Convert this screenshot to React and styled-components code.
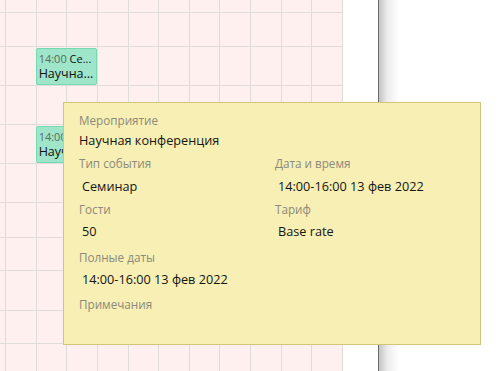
import React from 'react';
import styled, { createGlobalStyle } from 'styled-components';

const GlobalStyle = createGlobalStyle`
  html, body {
    margin: 0;
    padding: 0;
    background: #fff;
    font-family: "Open Sans", "Noto Sans", sans-serif;
  }
`;

const rowHeights = [13, 34, 39, 39, 39, 39, 35, 33, 40, 33, 40];
const colCount = 12;

const events = [
  { row: 3, col: 3, time: '14:00', type: 'Се...', title: 'Научна...' },
  { row: 5, col: 3, time: '14:00', type: 'Се...', title: 'Научна...' },
];

const Page = styled.div`
  display: flex;
  width: 501px;
  height: 371px;
  overflow: hidden;
  position: relative;
`;

const Board = styled.div`
  width: 378px;
  flex: none;
  background: #fff;
`;

const Grid = styled.div`
  display: grid;
  width: 343px;
  grid-template-columns: 6px repeat(11, 1fr);
  grid-template-rows: ${rowHeights.map((h) => `${h}px`).join(' ')};
  background: #fff0f0;
`;

const Cell = styled.div`
  box-sizing: border-box;
  border-right: 1px solid #e0dcdc;
  border-bottom: 1px solid #e0dcdc;
`;

const Event = styled.div`
  grid-column: ${(p) => p.$col} / span 2;
  grid-row: ${(p) => p.$row};
  align-self: end;
  box-sizing: border-box;
  height: 37px;
  margin: 0 1px 1px -1px;
  padding: 2px 2px 0 2px;
  background: #9fe5c9;
  border: 1px solid #74dab2;
  border-radius: 2px;
  overflow: hidden;
  white-space: nowrap;
  z-index: 1;
`;

const EventHead = styled.div`
  font-size: 11px;
  line-height: 15px;
  color: #111;
`;

const EventTime = styled.span`
  color: #566d60;
`;

const EventTitle = styled.div`
  font-size: 12.5px;
  line-height: 16px;
  color: #111;
`;

const SidePanel = styled.div`
  flex: 1;
  border-left: 1px solid #6a6a6a;
  background: linear-gradient(to right, #c4c4c4 0px, #ebebeb 8px, #fff 20px);
`;

const Tooltip = styled.div`
  position: absolute;
  left: 63px;
  top: 102px;
  width: 418px;
  height: 243px;
  box-sizing: border-box;
  padding: 9px 15px;
  background: #f7efb4;
  border: 1px solid #d3c67a;
  display: flex;
  flex-direction: column;
  gap: 6px;
  z-index: 2;
`;

const Pair = styled.div`
  display: grid;
  grid-template-columns: 196px 1fr;
`;

const Field = styled.div`
  display: flex;
  flex-direction: column;
  gap: ${(p) => p.$gap || 5}px;
  margin-top: ${(p) => p.$space || 0}px;
`;

const Label = styled.div`
  font-size: 11.7px;
  line-height: 16px;
  color: #8b8a7c;
`;

const Value = styled.div`
  font-size: 12.7px;
  line-height: 18px;
  min-height: 18px;
  color: #151515;
  padding-left: ${(p) => (p.$boxed ? 3 : 0)}px;
`;

const App = () => {
  const cells = [];
  rowHeights.forEach((_, r) => {
    for (let c = 0; c < colCount; c++) {
      cells.push(<Cell key={`${r}-${c}`} style={{ gridRow: r + 1, gridColumn: c + 1 }} />);
    }
  });

  return (
    <>
      <GlobalStyle />
      <Page>
        <Board>
          <Grid>
            {cells}
            {events.map((e, i) => (
              <Event key={i} $row={e.row} $col={e.col}>
                <EventHead>
                  <EventTime>{e.time}</EventTime> {e.type}
                </EventHead>
                <EventTitle>{e.title}</EventTitle>
              </Event>
            ))}
          </Grid>
        </Board>
        <SidePanel />
        <Tooltip>
          <Field $gap={3}>
            <Label>Мероприятие</Label>
            <Value>Научная конференция</Value>
          </Field>
          <Pair>
            <Field $gap={6}>
              <Label>Тип события</Label>
              <Value $boxed>Семинар</Value>
            </Field>
            <Field $gap={6}>
              <Label>Дата и время</Label>
              <Value $boxed>14:00-16:00 13 фев 2022</Value>
            </Field>
          </Pair>
          <Pair>
            <Field>
              <Label>Гости</Label>
              <Value $boxed>50</Value>
            </Field>
            <Field>
              <Label>Тариф</Label>
              <Value $boxed>Base rate</Value>
            </Field>
          </Pair>
          <Field $space={3}>
            <Label>Полные даты</Label>
            <Value $boxed>14:00-16:00 13 фев 2022</Value>
          </Field>
          <Field $space={2}>
            <Label>Примечания</Label>
          </Field>
        </Tooltip>
      </Page>
    </>
  );
};

export default App;
